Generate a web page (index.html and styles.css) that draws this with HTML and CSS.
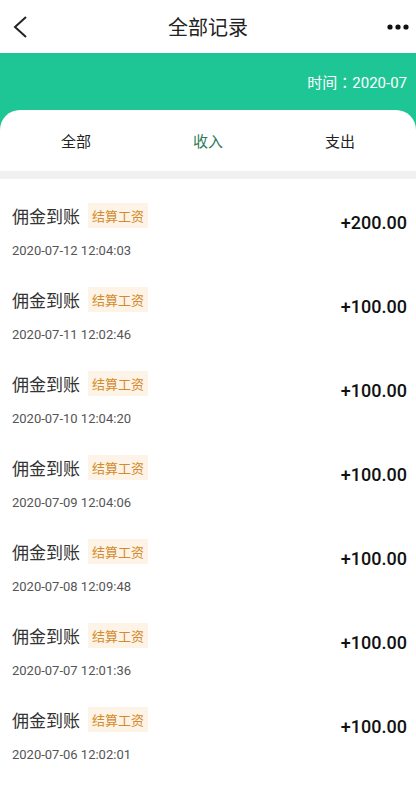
FILE: index.html
```html
<!DOCTYPE html>
<html lang="zh">
<head>
  <meta charset="UTF-8">
  <title>全部记录</title>
  <link rel="stylesheet" href="styles.css">
</head>
<body>
  <div class="topbar">
    <svg class="back" width="16" height="24" viewBox="0 0 16 24">
      <path d="M14 2 L3 12 L14 22" fill="none" stroke="#222" stroke-width="2"/>
    </svg>
    <h1>全部记录</h1>
    <svg class="more" width="22" height="6" viewBox="0 0 22 6">
      <circle cx="3" cy="3" r="2.6" fill="#111"/>
      <circle cx="11" cy="3" r="2.6" fill="#111"/>
      <circle cx="19" cy="3" r="2.6" fill="#111"/>
    </svg>
  </div>

  <div class="band">
    <div class="time" lang="zh-Hant">时间：2020-07</div>
  </div>

  <div class="card">
    <div class="tabs">
      <div class="tab">全部</div>
      <div class="tab active">收入</div>
      <div class="tab">支出</div>
    </div>
    <div class="sep"></div>

    <div class="list">
      <div class="row">
        <div class="info">
          <div class="title">佣金到账 <span class="tag">结算工资</span></div>
          <div class="date">2020-07-12 12:04:03</div>
        </div>
        <div class="amount">+200.00</div>
      </div>
      <div class="row">
        <div class="info">
          <div class="title">佣金到账 <span class="tag">结算工资</span></div>
          <div class="date">2020-07-11 12:02:46</div>
        </div>
        <div class="amount">+100.00</div>
      </div>
      <div class="row">
        <div class="info">
          <div class="title">佣金到账 <span class="tag">结算工资</span></div>
          <div class="date">2020-07-10 12:04:20</div>
        </div>
        <div class="amount">+100.00</div>
      </div>
      <div class="row">
        <div class="info">
          <div class="title">佣金到账 <span class="tag">结算工资</span></div>
          <div class="date">2020-07-09 12:04:06</div>
        </div>
        <div class="amount">+100.00</div>
      </div>
      <div class="row">
        <div class="info">
          <div class="title">佣金到账 <span class="tag">结算工资</span></div>
          <div class="date">2020-07-08 12:09:48</div>
        </div>
        <div class="amount">+100.00</div>
      </div>
      <div class="row">
        <div class="info">
          <div class="title">佣金到账 <span class="tag">结算工资</span></div>
          <div class="date">2020-07-07 12:01:36</div>
        </div>
        <div class="amount">+100.00</div>
      </div>
      <div class="row">
        <div class="info">
          <div class="title">佣金到账 <span class="tag">结算工资</span></div>
          <div class="date">2020-07-06 12:02:01</div>
        </div>
        <div class="amount">+100.00</div>
      </div>
    </div>
  </div>
</body>
</html>
```

FILE: styles.css
```css
body {
  margin: 0;
  font-family: Roboto, "Noto Sans CJK SC", sans-serif;
  background: #fff;
  color: #222;
}
.topbar {
  height: 53px;
  display: flex;
  align-items: center;
  justify-content: space-between;
  padding: 0 7px 0 12px;
  position: relative;
}
.topbar h1 {
  position: absolute;
  left: 0;
  right: 0;
  margin: 0;
  text-align: center;
  font-size: 20px;
  font-weight: normal;
  color: #222;
  pointer-events: none;
}
.back {
  margin-top: 1px;
}
.band {
  background: #1fc695;
  height: 77px;
  padding-right: 9px;
  box-sizing: border-box;
}
.time {
  text-align: right;
  color: #fff;
  font-family: Roboto, "Noto Sans CJK TC", sans-serif;
  font-size: 15px;
  padding-top: 18px;
}
.card {
  background: #fff;
  border-radius: 20px 20px 0 0;
  margin-top: -20px;
  position: relative;
}
.tabs {
  display: flex;
  height: 61px;
  align-items: center;
  padding: 0 10px;
}
.tab {
  flex: 1;
  text-align: center;
  font-size: 15px;
  color: #222;
}
.tab.active {
  color: #2f7a5a;
}
.sep {
  height: 8px;
  background: #f1f1f1;
}
.row {
  height: 84px;
  box-sizing: border-box;
  display: flex;
  align-items: flex-start;
  justify-content: space-between;
  padding: 24px 9px 0 12px;
}
.title {
  font-size: 17px;
  height: 24px;
  color: #333;
  display: flex;
  align-items: center;
  gap: 8px;
}
.tag {
  font-size: 13px;
  color: #d38a2c;
  background: #fdf3e6;
  padding: 3px 4px;
}
.date {
  font-size: 13px;
  line-height: 16px;
  color: #555;
  margin-top: 16px;
}
.amount {
  font-size: 18px;
  line-height: 24px;
  font-weight: 500;
  color: #111;
  margin-top: 8px;
}
```
